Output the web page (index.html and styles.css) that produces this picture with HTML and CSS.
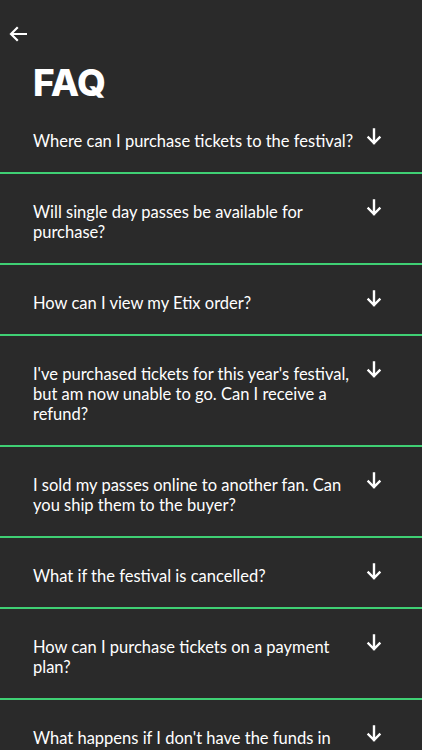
FILE: index.html
```html
<!DOCTYPE html>
<html lang="en">
<head>
    <meta charset="UTF-8">
    <meta name="viewport" content="width=device-width, initial-scale=1.0">
    <title>FAQ</title>
    <link rel="stylesheet" href="styles.css">
</head>
<body>
    <div class="faq-page">
        <header class="faq-header">
            <button class="back-button" aria-label="Back">
                <svg width="18" height="16" viewBox="0 0 18 16" fill="none" stroke="white" stroke-width="2.2" stroke-linecap="square">
                    <path d="M17 8H2.5M8 2L2 8l6 6"/>
                </svg>
            </button>
            <h1>FAQ</h1>
        </header>

        <ul class="faq-list">
            <li class="faq-item">
                <span class="faq-question">Where can I purchase tickets to the festival?</span>
                <span class="faq-toggle"><svg width="16" height="17" viewBox="0 0 16 17" fill="none" stroke="white" stroke-width="2.4" stroke-linecap="square"><path d="M8 1.5V15M2.5 9.5L8 15l5.5-5.5"/></svg></span>
            </li>
            <li class="faq-item">
                <span class="faq-question">Will single day passes be available for purchase?</span>
                <span class="faq-toggle"><svg width="16" height="17" viewBox="0 0 16 17" fill="none" stroke="white" stroke-width="2.4" stroke-linecap="square"><path d="M8 1.5V15M2.5 9.5L8 15l5.5-5.5"/></svg></span>
            </li>
            <li class="faq-item">
                <span class="faq-question">How can I view my Etix order?</span>
                <span class="faq-toggle"><svg width="16" height="17" viewBox="0 0 16 17" fill="none" stroke="white" stroke-width="2.4" stroke-linecap="square"><path d="M8 1.5V15M2.5 9.5L8 15l5.5-5.5"/></svg></span>
            </li>
            <li class="faq-item">
                <span class="faq-question">I've purchased tickets for this year's festival, but am now unable to go. Can I receive a refund?</span>
                <span class="faq-toggle"><svg width="16" height="17" viewBox="0 0 16 17" fill="none" stroke="white" stroke-width="2.4" stroke-linecap="square"><path d="M8 1.5V15M2.5 9.5L8 15l5.5-5.5"/></svg></span>
            </li>
            <li class="faq-item">
                <span class="faq-question">I sold my passes online to another fan. Can you ship them to the buyer?</span>
                <span class="faq-toggle"><svg width="16" height="17" viewBox="0 0 16 17" fill="none" stroke="white" stroke-width="2.4" stroke-linecap="square"><path d="M8 1.5V15M2.5 9.5L8 15l5.5-5.5"/></svg></span>
            </li>
            <li class="faq-item">
                <span class="faq-question">What if the festival is cancelled?</span>
                <span class="faq-toggle"><svg width="16" height="17" viewBox="0 0 16 17" fill="none" stroke="white" stroke-width="2.4" stroke-linecap="square"><path d="M8 1.5V15M2.5 9.5L8 15l5.5-5.5"/></svg></span>
            </li>
            <li class="faq-item">
                <span class="faq-question">How can I purchase tickets on a payment plan?</span>
                <span class="faq-toggle"><svg width="16" height="17" viewBox="0 0 16 17" fill="none" stroke="white" stroke-width="2.4" stroke-linecap="square"><path d="M8 1.5V15M2.5 9.5L8 15l5.5-5.5"/></svg></span>
            </li>
            <li class="faq-item">
                <span class="faq-question">What happens if I don't have the funds in my account on a payment plan date?</span>
                <span class="faq-toggle"><svg width="16" height="17" viewBox="0 0 16 17" fill="none" stroke="white" stroke-width="2.4" stroke-linecap="square"><path d="M8 1.5V15M2.5 9.5L8 15l5.5-5.5"/></svg></span>
            </li>
        </ul>
    </div>
</body>
</html>
```

FILE: styles.css
```css
* {
    margin: 0;
    padding: 0;
    box-sizing: border-box;
}

body {
    background-color: #2a2a2a;
    color: white;
    font-family: "Lato", "Open Sans", sans-serif;
    overflow: hidden;
    height: 100vh;
}

.faq-header {
    padding: 26px 0 0 0;
}

.back-button {
    display: block;
    background: none;
    border: none;
    padding: 0 0 0 9px;
    height: 16px;
    cursor: pointer;
}

.back-button svg {
    display: block;
}

.faq-header h1 {
    font-family: "Inter", "Lato", sans-serif;
    font-size: 37px;
    font-weight: 800;
    letter-spacing: -0.5px;
    line-height: 41px;
    padding: 20px 0 0 33px;
}

.faq-list {
    list-style: none;
}

.faq-item {
    display: flex;
    justify-content: space-between;
    align-items: flex-start;
    padding: 28px 40px 21px 33px;
    border-bottom: 2px solid #3fcf74;
}

.faq-question {
    max-width: 321px;
    font-size: 16.5px;
    line-height: 20px;
}

.faq-toggle {
    flex-shrink: 0;
    margin-top: -3px;
}

.faq-toggle svg {
    display: block;
}
```
